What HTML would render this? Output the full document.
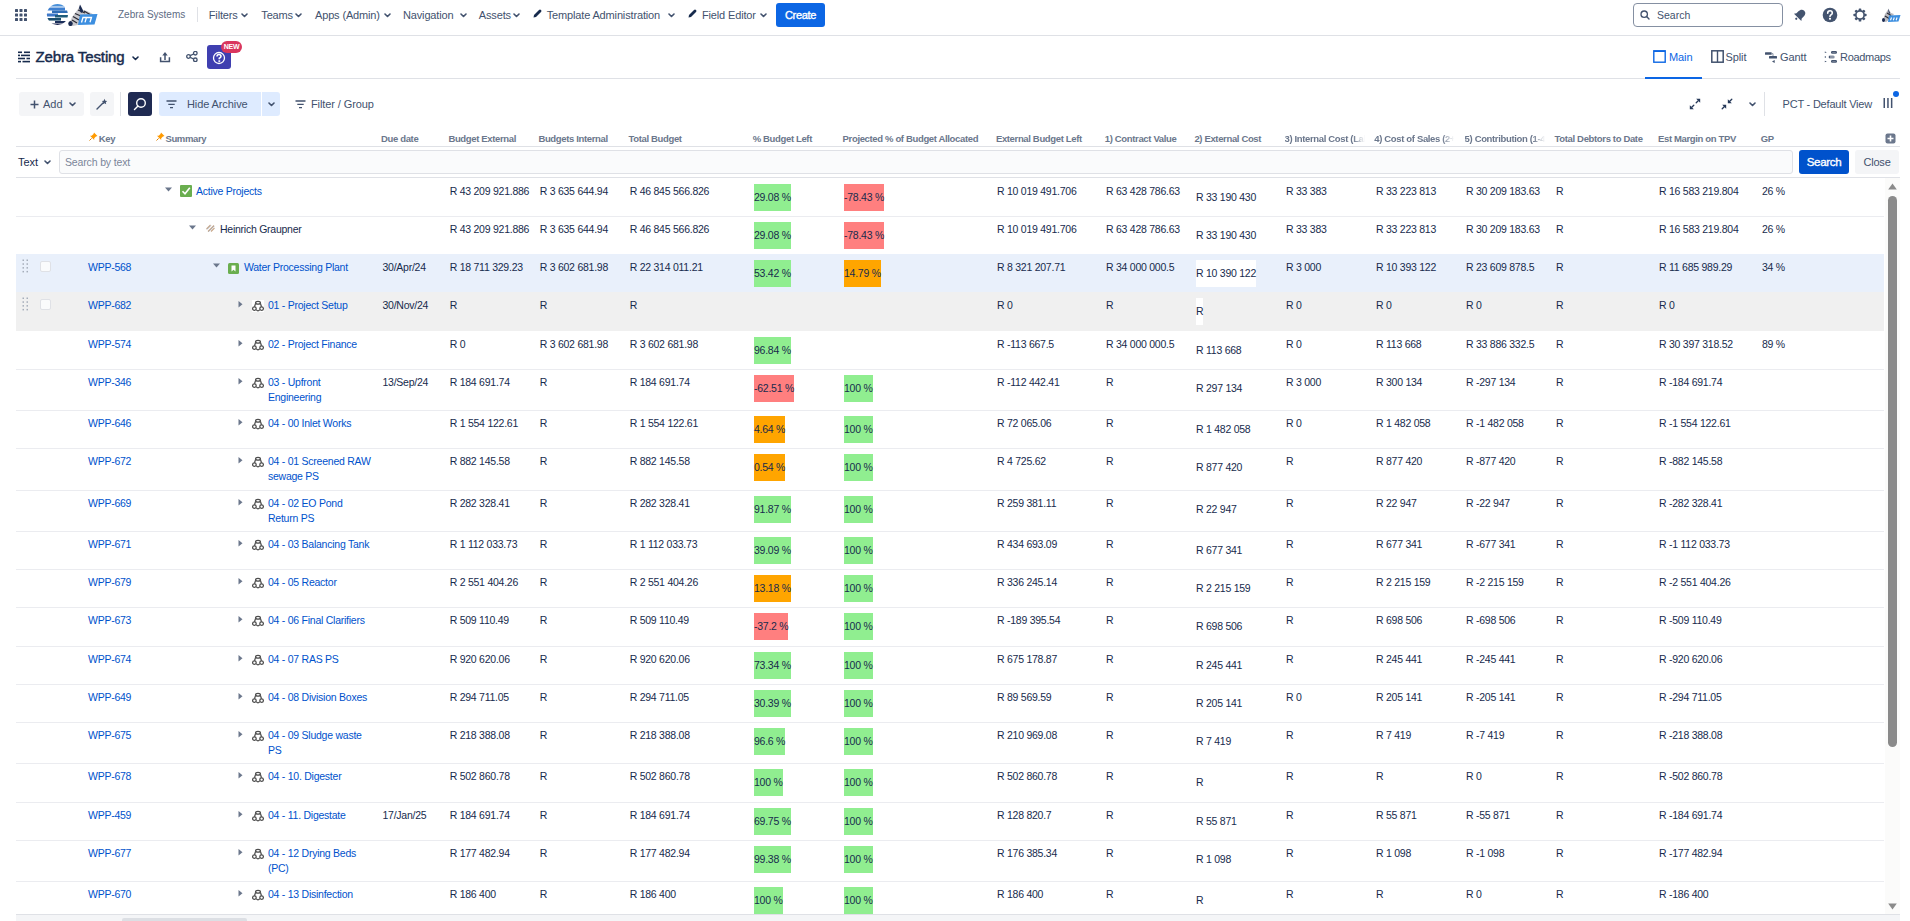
<!DOCTYPE html><html><head><meta charset="utf-8"><style>
*{box-sizing:border-box}
html,body{margin:0;padding:0;width:1910px;height:921px;overflow:hidden;background:#fff;
 font-family:"Liberation Sans",sans-serif;color:#172B4D}
.a{position:absolute;white-space:nowrap}
.nav{font-size:11px;color:#42526E;letter-spacing:-0.15px;top:8px;line-height:14px}
.chev{position:absolute}
.hd{position:absolute;top:133px;font-size:9.5px;font-weight:bold;color:#6B778C;letter-spacing:-0.35px;line-height:12px;white-space:nowrap}
.row{position:absolute;left:16px;width:1868px}
.c{position:absolute;white-space:nowrap;font-size:10.5px;letter-spacing:-0.25px;line-height:15px;color:#172B4D}
.lnk{color:#0052CC}
.bd{position:absolute;height:27px;white-space:nowrap;font-size:10.5px;letter-spacing:-0.25px;line-height:15px;padding-top:6px;color:#172B4D}
.g{background:#90EE90}.r{background:#FF7F7F}.o{background:#FFA500}.w{background:#fff}
</style></head><body>
<div class="a" style="left:0;top:35px;width:1910px;height:1px;background:#DFE1E6"></div>
<svg class="a" style="left:14px;top:8px" width="14" height="14" viewBox="0 0 14 14"><rect x="1.0" y="1.0" width="3" height="3" rx="0.6" fill="#42526E"/><rect x="5.5" y="1.0" width="3" height="3" rx="0.6" fill="#42526E"/><rect x="10.0" y="1.0" width="3" height="3" rx="0.6" fill="#42526E"/><rect x="1.0" y="5.5" width="3" height="3" rx="0.6" fill="#42526E"/><rect x="5.5" y="5.5" width="3" height="3" rx="0.6" fill="#42526E"/><rect x="10.0" y="5.5" width="3" height="3" rx="0.6" fill="#42526E"/><rect x="1.0" y="10.0" width="3" height="3" rx="0.6" fill="#42526E"/><rect x="5.5" y="10.0" width="3" height="3" rx="0.6" fill="#42526E"/><rect x="10.0" y="10.0" width="3" height="3" rx="0.6" fill="#42526E"/></svg>
<svg class="a" style="left:46px;top:3px" width="52" height="23" viewBox="0 0 52 23">
<defs><clipPath id="gc"><circle cx="11.5" cy="11.5" r="10.6"/></clipPath></defs>
<g clip-path="url(#gc)">
<rect x="0" y="0.5" width="23" height="3" fill="#4A90D9"/>
<rect x="0" y="4.5" width="19" height="3" fill="#3D7FD0"/>
<rect x="6" y="7.5" width="17" height="2.5" fill="#2F6DB5"/>
<rect x="0" y="10.5" width="12" height="3" fill="#3E78C8"/>
<rect x="9" y="12" width="14" height="2.5" fill="#1F5C7A"/>
<rect x="0" y="15" width="15" height="2.6" fill="#1B4F6E"/>
<rect x="9" y="18" width="14" height="2" fill="#1A2E5A"/>
<rect x="3" y="20.5" width="16" height="2.5" fill="#141E4A"/>
</g>
<path d="M23 21.5 L26 14 L31 7.5 L34.5 2 L37 7 L41 8 L46 10.5 L48 12.5 L40 15 L34 21.5 L27 23 Z" fill="#C9C9CE"/>
<g stroke="#2A2A34" stroke-width="1.3" fill="none"><path d="M27 13.5 L33 17"/><path d="M29 10.5 L36 13.5"/><path d="M32 7 L39 10"/><path d="M38 8 L44 11.5"/><path d="M26 17 L31 20"/></g>
<path d="M34 1.5 L37.5 8.5 L35 10 L33 5 Z" fill="#1A2A50"/>
<ellipse cx="24.5" cy="20.5" rx="2.2" ry="2.6" fill="#1A2A50"/>
<path d="M34 11.5 L51.5 11 L48.5 21.5 L32 22 Z" fill="#3D8FE0"/>
<path d="M35.5 19.5 L37 14.5 L45.5 14.3 L44 19.3 M40.5 14.4 L39 19.4" fill="none" stroke="#fff" stroke-width="1.3"/>
</svg>
<div class="a" style="left:118px;top:8px;font-size:10px;color:#5E6C84;line-height:14px">Zebra Systems</div>
<div class="a" style="left:197px;top:7px;width:1px;height:15px;background:#DFE1E6"></div>
<div class="a nav" style="left:208.8px">Filters</div>
<svg class="a" style="left:240.5px;top:12.5px" width="7" height="5" viewBox="0 0 7 5"><path d="M1 1 L3.5 3.5 L6 1" fill="none" stroke="#42526E" stroke-width="1.6" stroke-linecap="round" stroke-linejoin="round"/></svg>
<div class="a nav" style="left:261.3px">Teams</div>
<svg class="a" style="left:295px;top:12.5px" width="7" height="5" viewBox="0 0 7 5"><path d="M1 1 L3.5 3.5 L6 1" fill="none" stroke="#42526E" stroke-width="1.6" stroke-linecap="round" stroke-linejoin="round"/></svg>
<div class="a nav" style="left:315px">Apps (Admin)</div>
<svg class="a" style="left:383.5px;top:12.5px" width="7" height="5" viewBox="0 0 7 5"><path d="M1 1 L3.5 3.5 L6 1" fill="none" stroke="#42526E" stroke-width="1.6" stroke-linecap="round" stroke-linejoin="round"/></svg>
<div class="a nav" style="left:403px">Navigation</div>
<svg class="a" style="left:459.5px;top:12.5px" width="7" height="5" viewBox="0 0 7 5"><path d="M1 1 L3.5 3.5 L6 1" fill="none" stroke="#42526E" stroke-width="1.6" stroke-linecap="round" stroke-linejoin="round"/></svg>
<div class="a nav" style="left:478.8px">Assets</div>
<svg class="a" style="left:513px;top:12.5px" width="7" height="5" viewBox="0 0 7 5"><path d="M1 1 L3.5 3.5 L6 1" fill="none" stroke="#42526E" stroke-width="1.6" stroke-linecap="round" stroke-linejoin="round"/></svg>
<svg class="a" style="left:533px;top:9px" width="9" height="9" viewBox="0 0 9 9"><path d="M0.5 8.5 L1 6 L6 1 Q7 0 8 1 Q9 2 8 3 L3 8 Z" fill="#172B4D"/></svg>
<div class="a nav" style="left:546.7px">Template Administration</div>
<svg class="a" style="left:667.5px;top:12.5px" width="7" height="5" viewBox="0 0 7 5"><path d="M1 1 L3.5 3.5 L6 1" fill="none" stroke="#42526E" stroke-width="1.6" stroke-linecap="round" stroke-linejoin="round"/></svg>
<svg class="a" style="left:688px;top:9px" width="9" height="9" viewBox="0 0 9 9"><path d="M0.5 8.5 L1 6 L6 1 Q7 0 8 1 Q9 2 8 3 L3 8 Z" fill="#172B4D"/></svg>
<div class="a nav" style="left:702px">Field Editor</div>
<svg class="a" style="left:759.5px;top:12.5px" width="7" height="5" viewBox="0 0 7 5"><path d="M1 1 L3.5 3.5 L6 1" fill="none" stroke="#42526E" stroke-width="1.6" stroke-linecap="round" stroke-linejoin="round"/></svg>
<div class="a" style="left:776px;top:3px;width:49px;height:24px;background:#0C66E4;border-radius:3px;color:#fff;font-size:11px;line-height:24px;text-align:center;letter-spacing:-0.3px;-webkit-text-stroke:0.35px #fff">Create</div>
<div class="a" style="left:1633px;top:3px;width:150px;height:24px;border:1.2px solid #8590A2;border-radius:4px;background:#fff"></div>
<svg class="a" style="left:1640px;top:10px" width="10" height="10" viewBox="0 0 10 10"><circle cx="4.2" cy="4.2" r="3.2" fill="none" stroke="#42526E" stroke-width="1.3"/><path d="M6.6 6.6 L9 9" stroke="#42526E" stroke-width="1.4" stroke-linecap="round"/></svg>
<div class="a" style="left:1657px;top:7.5px;font-size:10.5px;color:#42526E;line-height:14px">Search</div>
<svg class="a" style="left:1792px;top:7px" width="16" height="16" viewBox="0 0 16 16"><g transform="rotate(45 8 8)" fill="#44546F"><path d="M8 2 C5.3 2 4.3 4.2 4.3 6.5 V9.3 L2.8 11.3 H13.2 L11.7 9.3 V6.5 C11.7 4.2 10.7 2 8 2 Z"/><circle cx="8" cy="13.3" r="1.1"/></g></svg>
<svg class="a" style="left:1822px;top:7px" width="16" height="16" viewBox="0 0 16 16"><circle cx="8" cy="8" r="7.3" fill="#44546F"/><path d="M5.7 6.2 Q5.7 3.8 8 3.8 Q10.3 3.8 10.3 6 Q10.3 7.3 8.8 8 Q8 8.4 8 9.6" fill="none" stroke="#fff" stroke-width="1.6" stroke-linecap="round"/><rect x="7" y="11" width="2" height="1.6" fill="#fff"/></svg>
<svg class="a" style="left:1852.5px;top:7.5px" width="14" height="14" viewBox="0 0 14 14"><g fill="#44546F"><circle cx="7" cy="7" r="5"/><rect x="5.7" y="0.4" width="2.6" height="2.6" rx="0.7" transform="rotate(0 7 7)"/><rect x="5.7" y="0.4" width="2.6" height="2.6" rx="0.7" transform="rotate(45 7 7)"/><rect x="5.7" y="0.4" width="2.6" height="2.6" rx="0.7" transform="rotate(90 7 7)"/><rect x="5.7" y="0.4" width="2.6" height="2.6" rx="0.7" transform="rotate(135 7 7)"/><rect x="5.7" y="0.4" width="2.6" height="2.6" rx="0.7" transform="rotate(180 7 7)"/><rect x="5.7" y="0.4" width="2.6" height="2.6" rx="0.7" transform="rotate(225 7 7)"/><rect x="5.7" y="0.4" width="2.6" height="2.6" rx="0.7" transform="rotate(270 7 7)"/><rect x="5.7" y="0.4" width="2.6" height="2.6" rx="0.7" transform="rotate(315 7 7)"/></g><circle cx="7" cy="7" r="3.3" fill="#fff"/></svg>
<svg class="a" style="left:1881px;top:7px" width="20" height="16" viewBox="0 0 20 16"><path d="M1.5 14 L4 7 L7.5 2 L10 6 L13 7 L9 12 L5 15 Z" fill="#B8B8BE"/><g stroke="#2A2A34" stroke-width="1.1"><path d="M4 9 L8 11.5"/><path d="M6 6 L10 8.5"/></g><path d="M7 1.5 L9 6 L8 7Z" fill="#1A2A50"/><ellipse cx="2.5" cy="13" rx="1.5" ry="2" fill="#1A2A50"/><path d="M8 8.5 L19.5 8 L17.5 14.5 L7 15 Z" fill="#3D8FE0"/><path d="M9.5 13.3 L10.5 10.5 M12.3 13.3 L13.3 10.5 M15.1 13.3 L16.1 10.5" stroke="#fff" stroke-width="1.1"/></svg>
<div class="a" style="left:16px;top:78px;width:1884px;height:1px;background:#DFE1E6"></div>
<svg class="a" style="left:18px;top:51px" width="12" height="12" viewBox="0 0 12 12"><g fill="#172B4D"><rect x="0" y="0.5" width="4" height="1.6"/><rect x="6" y="0.5" width="6" height="1.6"/><rect x="0" y="3.6" width="2" height="1.6"/><rect x="3" y="3.6" width="9" height="1.6"/><rect x="0" y="6.7" width="7" height="1.6"/><rect x="8.5" y="6.7" width="3.5" height="1.6"/><rect x="0" y="9.8" width="3" height="1.6"/><rect x="4.5" y="9.8" width="7.5" height="1.6"/></g></svg>
<div class="a" style="left:35.5px;top:48px;font-size:15px;color:#172B4D;line-height:18px;letter-spacing:-0.12px;-webkit-text-stroke:0.45px #172B4D">Zebra Testing</div>
<svg class="a" style="left:131.5px;top:55.5px" width="7" height="5" viewBox="0 0 7 5"><path d="M1 1 L3.5 3.5 L6 1" fill="none" stroke="#172B4D" stroke-width="1.6" stroke-linecap="round" stroke-linejoin="round"/></svg>
<svg class="a" style="left:159px;top:51px" width="12" height="12" viewBox="0 0 12 12"><path d="M1.6 6.3 V10.6 H10.4 V6.3" fill="none" stroke="#42526E" stroke-width="1.5"/><path d="M6 9 V3.5" stroke="#42526E" stroke-width="1.5"/><path d="M3.3 4.6 L6 1 L8.7 4.6 Z" fill="#42526E"/></svg>
<svg class="a" style="left:186px;top:51px" width="12" height="11" viewBox="0 0 12 11"><g fill="none" stroke="#42526E" stroke-width="1.3"><circle cx="2.5" cy="5.5" r="1.8"/><circle cx="9.3" cy="2.2" r="1.8"/><circle cx="9.3" cy="8.8" r="1.8"/><path d="M4.2 4.6 L7.6 3 M4.2 6.4 L7.6 8"/></g></svg>
<div class="a" style="left:207px;top:45px;width:24px;height:24px;background:#3F3FB0;border-radius:3px"></div>
<svg class="a" style="left:212px;top:50.5px" width="14" height="14" viewBox="0 0 14 14"><circle cx="7" cy="7" r="5.5" fill="none" stroke="#fff" stroke-width="1.3"/><path d="M5 5.6 Q5 3.5 7 3.5 Q9 3.5 9 5.3 Q9 6.5 7.3 7.3 V8.3" fill="none" stroke="#fff" stroke-width="1.6"/><rect x="6.4" y="9.3" width="1.8" height="1.6" fill="#fff"/></svg>
<div class="a" style="left:221px;top:41px;width:21px;height:12px;background:#D9365E;border-radius:6px;color:#fff;font-size:7px;font-weight:bold;line-height:11.5px;text-align:center;letter-spacing:-0.2px">NEW</div>
<svg class="a" style="left:1653px;top:50px" width="13" height="13" viewBox="0 0 13 13"><rect x="0.8" y="0.8" width="11.4" height="11.4" fill="none" stroke="#0C66E4" stroke-width="1.4"/><rect x="0.8" y="0.8" width="11.4" height="1.2" fill="#0C66E4"/></svg>
<div class="a" style="left:1669px;top:50px;font-size:11px;color:#0C66E4;line-height:14px;letter-spacing:-0.1px">Main</div>
<div class="a" style="left:1645px;top:77px;width:57px;height:2px;background:#0C66E4"></div>
<svg class="a" style="left:1710.5px;top:50px" width="13" height="13" viewBox="0 0 13 13"><rect x="0.8" y="0.8" width="11.4" height="11.4" fill="none" stroke="#42526E" stroke-width="1.5"/><rect x="5.8" y="0.8" width="1.4" height="11.4" fill="#42526E"/></svg>
<div class="a" style="left:1725.5px;top:50px;font-size:11px;color:#42526E;line-height:14px;letter-spacing:-0.1px">Split</div>
<svg class="a" style="left:1764px;top:51px" width="14" height="13" viewBox="0 0 14 13"><g fill="#44546F"><rect x="1" y="1.3" width="6.7" height="2.5" rx="0.5"/><rect x="5" y="5" width="8" height="2.4" rx="0.5"/><path d="M8 10.5 L10.7 9.1 V11.9 Z"/></g><path d="M7.5 2.6 H9 V5" fill="none" stroke="#8993A4" stroke-width="1"/></svg>
<div class="a" style="left:1780px;top:50px;font-size:11px;color:#42526E;line-height:14px;letter-spacing:-0.1px">Gantt</div>
<svg class="a" style="left:1824px;top:50px" width="14" height="14" viewBox="0 0 14 14"><g fill="#44546F"><path d="M0.8 1.6 L2.8 2.3 L0.8 3 Z"/><rect x="0.8" y="6.2" width="1" height="1.6"/><path d="M0.8 10.8 L2.8 11.5 L0.8 12.2 Z"/></g><g fill="none" stroke="#44546F" stroke-width="1.3"><rect x="7.6" y="1.6" width="4.8" height="1.6" rx="0.8"/><rect x="7.6" y="10.6" width="4.8" height="1.6" rx="0.8"/></g><rect x="4.7" y="5.4" width="6" height="3.1" rx="1.5" fill="#8993A4"/><rect x="4.9" y="5.8" width="1" height="2.3" fill="#44546F"/></svg>
<div class="a" style="left:1840px;top:50px;font-size:11px;color:#42526E;line-height:14px;letter-spacing:-0.3px">Roadmaps</div>
<div class="a" style="left:19px;top:92px;width:65px;height:24px;background:#F4F5F7;border-radius:3px"></div>
<svg class="a" style="left:29.5px;top:99.5px" width="9" height="9" viewBox="0 0 9 9"><path d="M4.5 0.5 V8.5 M0.5 4.5 H8.5" stroke="#42526E" stroke-width="1.5"/></svg>
<div class="a" style="left:43px;top:97px;font-size:11px;color:#42526E;line-height:14px">Add</div>
<svg class="a" style="left:68.5px;top:102px" width="7" height="5" viewBox="0 0 7 5"><path d="M1 1 L3.5 3.5 L6 1" fill="none" stroke="#42526E" stroke-width="1.6" stroke-linecap="round" stroke-linejoin="round"/></svg>
<div class="a" style="left:90px;top:92px;width:24px;height:24px;background:#F4F5F7;border-radius:3px"></div>
<svg class="a" style="left:96px;top:98px" width="12" height="12" viewBox="0 0 12 12"><path d="M1 11 L7 5" stroke="#42526E" stroke-width="1.4" stroke-linecap="round"/><path d="M8.5 0.8 L9.3 2.7 L11.2 3 L9.8 4.3 L10.2 6.2 L8.5 5.2 L6.8 6.2 L7.2 4.3 L5.8 3 L7.7 2.7 Z" fill="#42526E"/></svg>
<div class="a" style="left:120px;top:92px;width:1px;height:24px;background:#DFE1E6"></div>
<div class="a" style="left:128px;top:92px;width:24px;height:24px;background:#1F2A52;border-radius:3px"></div>
<svg class="a" style="left:133px;top:97px" width="14" height="14" viewBox="0 0 14 14"><circle cx="8" cy="6" r="4.3" fill="none" stroke="#fff" stroke-width="1.4"/><path d="M5 9 L1.5 12.5" stroke="#fff" stroke-width="1.5" stroke-linecap="round"/></svg>
<div class="a" style="left:159px;top:92px;width:121px;height:24px;background:#DEEBFF;border-radius:3px"></div>
<div class="a" style="left:261px;top:92px;width:1px;height:24px;background:#fff"></div>
<svg class="a" style="left:166px;top:99.5px" width="11" height="9" viewBox="0 0 11 9"><path d="M0.5 1 H10.5 M2.3 4.3 H8.7 M4 7.6 H7" stroke="#42526E" stroke-width="1.3"/></svg>
<div class="a" style="left:187px;top:97px;font-size:11px;color:#42526E;line-height:14px;letter-spacing:-0.1px">Hide Archive</div>
<svg class="a" style="left:267.5px;top:102px" width="7" height="5" viewBox="0 0 7 5"><path d="M1 1 L3.5 3.5 L6 1" fill="none" stroke="#42526E" stroke-width="1.6" stroke-linecap="round" stroke-linejoin="round"/></svg>
<svg class="a" style="left:295px;top:99.5px" width="11" height="9" viewBox="0 0 11 9"><path d="M0.5 1 H10.5 M2.3 4.3 H8.7 M4 7.6 H7" stroke="#42526E" stroke-width="1.3"/></svg>
<div class="a" style="left:311px;top:97px;font-size:11px;color:#42526E;line-height:14px;letter-spacing:-0.1px">Filter / Group</div>
<svg class="a" style="left:1689px;top:98px" width="12" height="12" viewBox="0 0 12 12"><g fill="#253858"><path d="M11.2 0.8 V4.8 L7.2 0.8 Z"/><path d="M0.8 11.2 V7.2 L4.8 11.2 Z"/></g><g stroke="#253858" stroke-width="1.3" stroke-linecap="round"><path d="M9 3 L7.2 4.8"/><path d="M3 9 L4.8 7.2"/></g></svg>
<svg class="a" style="left:1721px;top:98px" width="12" height="12" viewBox="0 0 12 12"><g fill="#253858"><path d="M6.8 5.2 V1.2 L10.8 5.2 Z"/><path d="M5.2 6.8 H1.2 L5.2 10.8 Z"/></g><g stroke="#253858" stroke-width="1.3" stroke-linecap="round"><path d="M8.5 3.5 L10.8 1.2"/><path d="M3.5 8.5 L1.2 10.8"/></g></svg>
<svg class="a" style="left:1748.5px;top:102px" width="7" height="5" viewBox="0 0 7 5"><path d="M1 1 L3.5 3.5 L6 1" fill="none" stroke="#42526E" stroke-width="1.6" stroke-linecap="round" stroke-linejoin="round"/></svg>
<div class="a" style="left:1764px;top:92px;width:1px;height:24px;background:#DFE1E6"></div>
<div class="a" style="left:1782.5px;top:97px;font-size:11px;color:#42526E;line-height:14px;letter-spacing:-0.2px">PCT - Default View</div>
<svg class="a" style="left:1883px;top:97px" width="10" height="12" viewBox="0 0 10 12"><g fill="#42526E"><rect x="0.5" y="1" width="1.5" height="10"/><rect x="4.2" y="1" width="1.5" height="10"/><rect x="7.9" y="1" width="1.5" height="10"/></g></svg>
<div class="a" style="left:1893px;top:91px;width:6px;height:6px;border-radius:50%;background:#0C66E4"></div>
<svg class="a" style="left:88.5px;top:132px" width="9" height="9" viewBox="0 0 9 9"><path d="M5 0.5 L8.5 4 L7 4.5 L5.2 6.3 L5.2 8 L1 3.8 L2.7 3.8 L4.5 2 Z" fill="#FF9A00"/><path d="M2.6 6.4 L0.5 8.5" stroke="#E08000" stroke-width="1"/></svg>
<svg class="a" style="left:155.5px;top:132px" width="9" height="9" viewBox="0 0 9 9"><path d="M5 0.5 L8.5 4 L7 4.5 L5.2 6.3 L5.2 8 L1 3.8 L2.7 3.8 L4.5 2 Z" fill="#FF9A00"/><path d="M2.6 6.4 L0.5 8.5" stroke="#E08000" stroke-width="1"/></svg>
<div class="hd" style="left:98.8px">Key</div>
<div class="hd" style="left:165.4px">Summary</div>
<div class="hd" style="left:381px">Due date</div>
<div class="hd" style="left:448.4px">Budget External</div>
<div class="hd" style="left:538.4px">Budgets Internal</div>
<div class="hd" style="left:628.5px">Total Budget</div>
<div class="hd" style="left:752.7px">% Budget Left</div>
<div class="hd" style="left:842.6px">Projected % of Budget Allocated</div>
<div class="hd" style="left:995.9px">External Budget Left</div>
<div class="hd" style="left:1104.8px">1) Contract Value</div>
<div class="hd" style="left:1194.4px">2) External Cost</div>
<div class="hd" style="left:1284.5px;width:80px;overflow:hidden;-webkit-mask-image:linear-gradient(90deg,#000 85%,transparent)">3) Internal Cost (Labour)</div>
<div class="hd" style="left:1374.3px;width:80px;overflow:hidden;-webkit-mask-image:linear-gradient(90deg,#000 85%,transparent)">4) Cost of Sales (2+3)</div>
<div class="hd" style="left:1464.6px;width:80px;overflow:hidden;-webkit-mask-image:linear-gradient(90deg,#000 85%,transparent)">5) Contribution (1-4)</div>
<div class="hd" style="left:1554.6px">Total Debtors to Date</div>
<div class="hd" style="left:1658px">Est Margin on TPV</div>
<div class="hd" style="left:1760.7px">GP</div>
<svg class="a" style="left:1885px;top:133px" width="11" height="11" viewBox="0 0 11 11"><rect x="0.5" y="0.5" width="10" height="10" rx="2" fill="#6B778C"/><path d="M5.5 2.5 V8.5 M2.5 5.5 H8.5" stroke="#fff" stroke-width="1.6"/></svg>
<div class="a" style="left:16px;top:146px;width:1884px;height:1px;background:#DFE1E6"></div>
<div class="a" style="left:18px;top:155px;font-size:11px;color:#172B4D;line-height:14px">Text</div>
<svg class="a" style="left:43.5px;top:160px" width="7" height="5" viewBox="0 0 7 5"><path d="M1 1 L3.5 3.5 L6 1" fill="none" stroke="#42526E" stroke-width="1.6" stroke-linecap="round" stroke-linejoin="round"/></svg>
<div class="a" style="left:59px;top:150px;width:1734px;height:24px;background:#FAFBFC;border:1px solid #DFE1E6;border-radius:3px"></div>
<div class="a" style="left:65px;top:155px;font-size:10.5px;color:#7A869A;line-height:14px;letter-spacing:-0.15px">Search by text</div>
<div class="a" style="left:1799px;top:150px;width:50px;height:24px;background:#0052CC;border-radius:3px;color:#fff;font-size:11.5px;line-height:24px;text-align:center;letter-spacing:-0.3px;-webkit-text-stroke:0.35px #fff">Search</div>
<div class="a" style="left:1855px;top:150px;width:44px;height:24px;background:#F4F5F7;border-radius:3px;color:#42526E;font-size:11px;line-height:24px;text-align:center;letter-spacing:-0.2px">Close</div>
<div class="a" style="left:16px;top:177px;width:1884px;height:1px;background:#DFE1E6"></div>
<div class="a" style="left:16px;top:216px;width:1868px;height:1px;background:#EBECF0"></div>
<svg class="a" style="left:165px;top:187px" width="7" height="5" viewBox="0 0 7 5"><path d="M0 0.5 H7 L3.5 4.5 Z" fill="#6B778C"/></svg>
<div class="a" style="left:180px;top:185px;line-height:0"><svg width="12" height="12" viewBox="0 0 12 12"><rect x="0" y="0" width="12" height="12" rx="1" fill="#6AAE4F"/><path d="M2.5 6.2 L5 8.8 L9.8 2.8" fill="none" stroke="#fff" stroke-width="1.6"/></svg></div>
<div class="c lnk" style="left:196px;top:184px">Active Projects</div>
<div class="c" style="left:449.7px;top:184px">R 43 209 921.886</div>
<div class="c" style="left:539.7px;top:184px">R 3 635 644.94</div>
<div class="c" style="left:629.7px;top:184px">R 46 845 566.826</div>
<div class="bd g" style="left:754px;top:184px">29.08 %</div>
<div class="bd r" style="left:844px;top:184px">-78.43 %</div>
<div class="c" style="left:997px;top:184px">R 10 019 491.706</div>
<div class="c" style="left:1106px;top:184px">R 63 428 786.63</div>
<div class="bd w" style="left:1196px;top:184px">R 33 190 430</div>
<div class="c" style="left:1286px;top:184px">R 33 383</div>
<div class="c" style="left:1376px;top:184px">R 33 223 813</div>
<div class="c" style="left:1466px;top:184px">R 30 209 183.63</div>
<div class="c" style="left:1556px;top:184px">R</div>
<div class="c" style="left:1659px;top:184px">R 16 583 219.804</div>
<div class="c" style="left:1762px;top:184px">26 %</div>
<div class="a" style="left:16px;top:254px;width:1868px;height:1px;background:#EBECF0"></div>
<svg class="a" style="left:189px;top:225px" width="7" height="5" viewBox="0 0 7 5"><path d="M0 0.5 H7 L3.5 4.5 Z" fill="#6B778C"/></svg>
<div class="a" style="left:206px;top:224px;line-height:0"><svg width="9" height="8" viewBox="0 0 9 8"><path d="M0.5 5 L4.5 1 M2 7.5 L8 1.5 M5 7.5 L8.5 4" stroke="#C8A88A" stroke-width="1.1"/><path d="M1 5.5 L5 1.5 M2.5 7.8 L8.3 2" stroke="#8090A8" stroke-width="0.5"/></svg></div>
<div class="c" style="left:220px;top:222px">Heinrich Graupner</div>
<div class="c" style="left:449.7px;top:222px">R 43 209 921.886</div>
<div class="c" style="left:539.7px;top:222px">R 3 635 644.94</div>
<div class="c" style="left:629.7px;top:222px">R 46 845 566.826</div>
<div class="bd g" style="left:754px;top:222px">29.08 %</div>
<div class="bd r" style="left:844px;top:222px">-78.43 %</div>
<div class="c" style="left:997px;top:222px">R 10 019 491.706</div>
<div class="c" style="left:1106px;top:222px">R 63 428 786.63</div>
<div class="bd w" style="left:1196px;top:222px">R 33 190 430</div>
<div class="c" style="left:1286px;top:222px">R 33 383</div>
<div class="c" style="left:1376px;top:222px">R 33 223 813</div>
<div class="c" style="left:1466px;top:222px">R 30 209 183.63</div>
<div class="c" style="left:1556px;top:222px">R</div>
<div class="c" style="left:1659px;top:222px">R 16 583 219.804</div>
<div class="c" style="left:1762px;top:222px">26 %</div>
<div class="a" style="left:16px;top:254px;width:1868px;height:38px;background:#E9F0FB"></div>
<svg class="a" style="left:22px;top:259px" width="7" height="14" viewBox="0 0 7 14"><rect x="0.5" y="0.5" width="1.5" height="1.5" fill="#A5ADBA"/><rect x="0.5" y="4.3" width="1.5" height="1.5" fill="#A5ADBA"/><rect x="0.5" y="8.1" width="1.5" height="1.5" fill="#A5ADBA"/><rect x="0.5" y="11.9" width="1.5" height="1.5" fill="#A5ADBA"/><rect x="4.5" y="0.5" width="1.5" height="1.5" fill="#A5ADBA"/><rect x="4.5" y="4.3" width="1.5" height="1.5" fill="#A5ADBA"/><rect x="4.5" y="8.1" width="1.5" height="1.5" fill="#A5ADBA"/><rect x="4.5" y="11.9" width="1.5" height="1.5" fill="#A5ADBA"/></svg>
<div class="a" style="left:39.5px;top:261px;width:11px;height:11px;border:1px solid #DFE1E6;border-radius:2px;background:#FAFBFC"></div>
<div class="c lnk" style="left:88px;top:260px">WPP-568</div>
<svg class="a" style="left:213px;top:263px" width="7" height="5" viewBox="0 0 7 5"><path d="M0 0.5 H7 L3.5 4.5 Z" fill="#6B778C"/></svg>
<div class="a" style="left:228px;top:263px;line-height:0"><svg width="11" height="11" viewBox="0 0 11 11"><rect x="0" y="0" width="11" height="11" rx="1.5" fill="#6AAE4F"/><path d="M3.5 2.5 H7.5 V8.5 L5.5 6.8 L3.5 8.5 Z" fill="#fff"/></svg></div>
<div class="c lnk" style="left:244px;top:260px">Water Processing Plant</div>
<div class="c" style="left:382.5px;top:260px">30/Apr/24</div>
<div class="c" style="left:449.7px;top:260px">R 18 711 329.23</div>
<div class="c" style="left:539.7px;top:260px">R 3 602 681.98</div>
<div class="c" style="left:629.7px;top:260px">R 22 314 011.21</div>
<div class="bd g" style="left:754px;top:260px">53.42 %</div>
<div class="bd o" style="left:844px;top:260px">14.79 %</div>
<div class="c" style="left:997px;top:260px">R 8 321 207.71</div>
<div class="c" style="left:1106px;top:260px">R 34 000 000.5</div>
<div class="bd w" style="left:1196px;top:260px">R 10 390 122</div>
<div class="c" style="left:1286px;top:260px">R 3 000</div>
<div class="c" style="left:1376px;top:260px">R 10 393 122</div>
<div class="c" style="left:1466px;top:260px">R 23 609 878.5</div>
<div class="c" style="left:1556px;top:260px">R</div>
<div class="c" style="left:1659px;top:260px">R 11 685 989.29</div>
<div class="c" style="left:1762px;top:260px">34 %</div>
<div class="a" style="left:16px;top:292px;width:1868px;height:39px;background:#F0F0F0"></div>
<svg class="a" style="left:22px;top:297px" width="7" height="14" viewBox="0 0 7 14"><rect x="0.5" y="0.5" width="1.5" height="1.5" fill="#A5ADBA"/><rect x="0.5" y="4.3" width="1.5" height="1.5" fill="#A5ADBA"/><rect x="0.5" y="8.1" width="1.5" height="1.5" fill="#A5ADBA"/><rect x="0.5" y="11.9" width="1.5" height="1.5" fill="#A5ADBA"/><rect x="4.5" y="0.5" width="1.5" height="1.5" fill="#A5ADBA"/><rect x="4.5" y="4.3" width="1.5" height="1.5" fill="#A5ADBA"/><rect x="4.5" y="8.1" width="1.5" height="1.5" fill="#A5ADBA"/><rect x="4.5" y="11.9" width="1.5" height="1.5" fill="#A5ADBA"/></svg>
<div class="a" style="left:39.5px;top:299px;width:11px;height:11px;border:1px solid #DFE1E6;border-radius:2px;background:#FAFBFC"></div>
<div class="c lnk" style="left:88px;top:298px">WPP-682</div>
<svg class="a" style="left:238px;top:301px" width="5" height="7" viewBox="0 0 5 7"><path d="M0.5 0 V6.5 L4.5 3.25 Z" fill="#6B778C"/></svg>
<div class="a" style="left:252px;top:300px;line-height:0"><svg width="12" height="12" viewBox="0 0 12 12"><rect x="0" y="0" width="12" height="12" fill="#fff"/><g fill="none" stroke="#4D4D4D" stroke-width="1.25"><ellipse cx="6" cy="2.8" rx="2.4" ry="1.4"/><circle cx="2.4" cy="8.6" r="1.8"/><circle cx="9.6" cy="8.6" r="1.8"/><path d="M3.6 3.4 L2.5 6.7 M8.4 3.4 L9.5 6.7 M4.2 9.6 Q6 11.9 7.8 9.6"/></g></svg></div>
<div class="c lnk" style="left:268px;top:298px">01 - Project Setup</div>
<div class="c" style="left:382.5px;top:298px">30/Nov/24</div>
<div class="c" style="left:449.7px;top:298px">R</div>
<div class="c" style="left:539.7px;top:298px">R</div>
<div class="c" style="left:629.7px;top:298px">R</div>
<div class="c" style="left:997px;top:298px">R 0</div>
<div class="c" style="left:1106px;top:298px">R</div>
<div class="bd w" style="left:1196px;top:298px">R</div>
<div class="c" style="left:1286px;top:298px">R 0</div>
<div class="c" style="left:1376px;top:298px">R 0</div>
<div class="c" style="left:1466px;top:298px">R 0</div>
<div class="c" style="left:1556px;top:298px">R</div>
<div class="c" style="left:1659px;top:298px">R 0</div>
<div class="a" style="left:16px;top:369px;width:1868px;height:1px;background:#EBECF0"></div>
<div class="c lnk" style="left:88px;top:337px">WPP-574</div>
<svg class="a" style="left:238px;top:340px" width="5" height="7" viewBox="0 0 5 7"><path d="M0.5 0 V6.5 L4.5 3.25 Z" fill="#6B778C"/></svg>
<div class="a" style="left:252px;top:339px;line-height:0"><svg width="12" height="12" viewBox="0 0 12 12"><rect x="0" y="0" width="12" height="12" fill="#fff"/><g fill="none" stroke="#4D4D4D" stroke-width="1.25"><ellipse cx="6" cy="2.8" rx="2.4" ry="1.4"/><circle cx="2.4" cy="8.6" r="1.8"/><circle cx="9.6" cy="8.6" r="1.8"/><path d="M3.6 3.4 L2.5 6.7 M8.4 3.4 L9.5 6.7 M4.2 9.6 Q6 11.9 7.8 9.6"/></g></svg></div>
<div class="c lnk" style="left:268px;top:337px">02 - Project Finance</div>
<div class="c" style="left:449.7px;top:337px">R 0</div>
<div class="c" style="left:539.7px;top:337px">R 3 602 681.98</div>
<div class="c" style="left:629.7px;top:337px">R 3 602 681.98</div>
<div class="bd g" style="left:754px;top:337px">96.84 %</div>
<div class="c" style="left:997px;top:337px">R -113 667.5</div>
<div class="c" style="left:1106px;top:337px">R 34 000 000.5</div>
<div class="bd w" style="left:1196px;top:337px">R 113 668</div>
<div class="c" style="left:1286px;top:337px">R 0</div>
<div class="c" style="left:1376px;top:337px">R 113 668</div>
<div class="c" style="left:1466px;top:337px">R 33 886 332.5</div>
<div class="c" style="left:1556px;top:337px">R</div>
<div class="c" style="left:1659px;top:337px">R 30 397 318.52</div>
<div class="c" style="left:1762px;top:337px">89 %</div>
<div class="a" style="left:16px;top:410px;width:1868px;height:1px;background:#EBECF0"></div>
<div class="c lnk" style="left:88px;top:375px">WPP-346</div>
<svg class="a" style="left:238px;top:378px" width="5" height="7" viewBox="0 0 5 7"><path d="M0.5 0 V6.5 L4.5 3.25 Z" fill="#6B778C"/></svg>
<div class="a" style="left:252px;top:377px;line-height:0"><svg width="12" height="12" viewBox="0 0 12 12"><rect x="0" y="0" width="12" height="12" fill="#fff"/><g fill="none" stroke="#4D4D4D" stroke-width="1.25"><ellipse cx="6" cy="2.8" rx="2.4" ry="1.4"/><circle cx="2.4" cy="8.6" r="1.8"/><circle cx="9.6" cy="8.6" r="1.8"/><path d="M3.6 3.4 L2.5 6.7 M8.4 3.4 L9.5 6.7 M4.2 9.6 Q6 11.9 7.8 9.6"/></g></svg></div>
<div class="c lnk" style="left:268px;top:375px">03 - Upfront</div>
<div class="c lnk" style="left:268px;top:390px">Engineering</div>
<div class="c" style="left:382.5px;top:375px">13/Sep/24</div>
<div class="c" style="left:449.7px;top:375px">R 184 691.74</div>
<div class="c" style="left:539.7px;top:375px">R</div>
<div class="c" style="left:629.7px;top:375px">R 184 691.74</div>
<div class="bd r" style="left:754px;top:375px">-62.51 %</div>
<div class="bd g" style="left:844px;top:375px">100 %</div>
<div class="c" style="left:997px;top:375px">R -112 442.41</div>
<div class="c" style="left:1106px;top:375px">R</div>
<div class="bd w" style="left:1196px;top:375px">R 297 134</div>
<div class="c" style="left:1286px;top:375px">R 3 000</div>
<div class="c" style="left:1376px;top:375px">R 300 134</div>
<div class="c" style="left:1466px;top:375px">R -297 134</div>
<div class="c" style="left:1556px;top:375px">R</div>
<div class="c" style="left:1659px;top:375px">R -184 691.74</div>
<div class="a" style="left:16px;top:448px;width:1868px;height:1px;background:#EBECF0"></div>
<div class="c lnk" style="left:88px;top:416px">WPP-646</div>
<svg class="a" style="left:238px;top:419px" width="5" height="7" viewBox="0 0 5 7"><path d="M0.5 0 V6.5 L4.5 3.25 Z" fill="#6B778C"/></svg>
<div class="a" style="left:252px;top:418px;line-height:0"><svg width="12" height="12" viewBox="0 0 12 12"><rect x="0" y="0" width="12" height="12" fill="#fff"/><g fill="none" stroke="#4D4D4D" stroke-width="1.25"><ellipse cx="6" cy="2.8" rx="2.4" ry="1.4"/><circle cx="2.4" cy="8.6" r="1.8"/><circle cx="9.6" cy="8.6" r="1.8"/><path d="M3.6 3.4 L2.5 6.7 M8.4 3.4 L9.5 6.7 M4.2 9.6 Q6 11.9 7.8 9.6"/></g></svg></div>
<div class="c lnk" style="left:268px;top:416px">04 - 00 Inlet Works</div>
<div class="c" style="left:449.7px;top:416px">R 1 554 122.61</div>
<div class="c" style="left:539.7px;top:416px">R</div>
<div class="c" style="left:629.7px;top:416px">R 1 554 122.61</div>
<div class="bd o" style="left:754px;top:416px">4.64 %</div>
<div class="bd g" style="left:844px;top:416px">100 %</div>
<div class="c" style="left:997px;top:416px">R 72 065.06</div>
<div class="c" style="left:1106px;top:416px">R</div>
<div class="bd w" style="left:1196px;top:416px">R 1 482 058</div>
<div class="c" style="left:1286px;top:416px">R 0</div>
<div class="c" style="left:1376px;top:416px">R 1 482 058</div>
<div class="c" style="left:1466px;top:416px">R -1 482 058</div>
<div class="c" style="left:1556px;top:416px">R</div>
<div class="c" style="left:1659px;top:416px">R -1 554 122.61</div>
<div class="a" style="left:16px;top:490px;width:1868px;height:1px;background:#EBECF0"></div>
<div class="c lnk" style="left:88px;top:454px">WPP-672</div>
<svg class="a" style="left:238px;top:457px" width="5" height="7" viewBox="0 0 5 7"><path d="M0.5 0 V6.5 L4.5 3.25 Z" fill="#6B778C"/></svg>
<div class="a" style="left:252px;top:456px;line-height:0"><svg width="12" height="12" viewBox="0 0 12 12"><rect x="0" y="0" width="12" height="12" fill="#fff"/><g fill="none" stroke="#4D4D4D" stroke-width="1.25"><ellipse cx="6" cy="2.8" rx="2.4" ry="1.4"/><circle cx="2.4" cy="8.6" r="1.8"/><circle cx="9.6" cy="8.6" r="1.8"/><path d="M3.6 3.4 L2.5 6.7 M8.4 3.4 L9.5 6.7 M4.2 9.6 Q6 11.9 7.8 9.6"/></g></svg></div>
<div class="c lnk" style="left:268px;top:454px">04 - 01 Screened RAW</div>
<div class="c lnk" style="left:268px;top:469px">sewage PS</div>
<div class="c" style="left:449.7px;top:454px">R 882 145.58</div>
<div class="c" style="left:539.7px;top:454px">R</div>
<div class="c" style="left:629.7px;top:454px">R 882 145.58</div>
<div class="bd o" style="left:754px;top:454px">0.54 %</div>
<div class="bd g" style="left:844px;top:454px">100 %</div>
<div class="c" style="left:997px;top:454px">R 4 725.62</div>
<div class="c" style="left:1106px;top:454px">R</div>
<div class="bd w" style="left:1196px;top:454px">R 877 420</div>
<div class="c" style="left:1286px;top:454px">R</div>
<div class="c" style="left:1376px;top:454px">R 877 420</div>
<div class="c" style="left:1466px;top:454px">R -877 420</div>
<div class="c" style="left:1556px;top:454px">R</div>
<div class="c" style="left:1659px;top:454px">R -882 145.58</div>
<div class="a" style="left:16px;top:531px;width:1868px;height:1px;background:#EBECF0"></div>
<div class="c lnk" style="left:88px;top:496px">WPP-669</div>
<svg class="a" style="left:238px;top:499px" width="5" height="7" viewBox="0 0 5 7"><path d="M0.5 0 V6.5 L4.5 3.25 Z" fill="#6B778C"/></svg>
<div class="a" style="left:252px;top:498px;line-height:0"><svg width="12" height="12" viewBox="0 0 12 12"><rect x="0" y="0" width="12" height="12" fill="#fff"/><g fill="none" stroke="#4D4D4D" stroke-width="1.25"><ellipse cx="6" cy="2.8" rx="2.4" ry="1.4"/><circle cx="2.4" cy="8.6" r="1.8"/><circle cx="9.6" cy="8.6" r="1.8"/><path d="M3.6 3.4 L2.5 6.7 M8.4 3.4 L9.5 6.7 M4.2 9.6 Q6 11.9 7.8 9.6"/></g></svg></div>
<div class="c lnk" style="left:268px;top:496px">04 - 02 EO Pond</div>
<div class="c lnk" style="left:268px;top:511px">Return PS</div>
<div class="c" style="left:449.7px;top:496px">R 282 328.41</div>
<div class="c" style="left:539.7px;top:496px">R</div>
<div class="c" style="left:629.7px;top:496px">R 282 328.41</div>
<div class="bd g" style="left:754px;top:496px">91.87 %</div>
<div class="bd g" style="left:844px;top:496px">100 %</div>
<div class="c" style="left:997px;top:496px">R 259 381.11</div>
<div class="c" style="left:1106px;top:496px">R</div>
<div class="bd w" style="left:1196px;top:496px">R 22 947</div>
<div class="c" style="left:1286px;top:496px">R</div>
<div class="c" style="left:1376px;top:496px">R 22 947</div>
<div class="c" style="left:1466px;top:496px">R -22 947</div>
<div class="c" style="left:1556px;top:496px">R</div>
<div class="c" style="left:1659px;top:496px">R -282 328.41</div>
<div class="a" style="left:16px;top:569px;width:1868px;height:1px;background:#EBECF0"></div>
<div class="c lnk" style="left:88px;top:537px">WPP-671</div>
<svg class="a" style="left:238px;top:540px" width="5" height="7" viewBox="0 0 5 7"><path d="M0.5 0 V6.5 L4.5 3.25 Z" fill="#6B778C"/></svg>
<div class="a" style="left:252px;top:539px;line-height:0"><svg width="12" height="12" viewBox="0 0 12 12"><rect x="0" y="0" width="12" height="12" fill="#fff"/><g fill="none" stroke="#4D4D4D" stroke-width="1.25"><ellipse cx="6" cy="2.8" rx="2.4" ry="1.4"/><circle cx="2.4" cy="8.6" r="1.8"/><circle cx="9.6" cy="8.6" r="1.8"/><path d="M3.6 3.4 L2.5 6.7 M8.4 3.4 L9.5 6.7 M4.2 9.6 Q6 11.9 7.8 9.6"/></g></svg></div>
<div class="c lnk" style="left:268px;top:537px">04 - 03 Balancing Tank</div>
<div class="c" style="left:449.7px;top:537px">R 1 112 033.73</div>
<div class="c" style="left:539.7px;top:537px">R</div>
<div class="c" style="left:629.7px;top:537px">R 1 112 033.73</div>
<div class="bd g" style="left:754px;top:537px">39.09 %</div>
<div class="bd g" style="left:844px;top:537px">100 %</div>
<div class="c" style="left:997px;top:537px">R 434 693.09</div>
<div class="c" style="left:1106px;top:537px">R</div>
<div class="bd w" style="left:1196px;top:537px">R 677 341</div>
<div class="c" style="left:1286px;top:537px">R</div>
<div class="c" style="left:1376px;top:537px">R 677 341</div>
<div class="c" style="left:1466px;top:537px">R -677 341</div>
<div class="c" style="left:1556px;top:537px">R</div>
<div class="c" style="left:1659px;top:537px">R -1 112 033.73</div>
<div class="a" style="left:16px;top:607px;width:1868px;height:1px;background:#EBECF0"></div>
<div class="c lnk" style="left:88px;top:575px">WPP-679</div>
<svg class="a" style="left:238px;top:578px" width="5" height="7" viewBox="0 0 5 7"><path d="M0.5 0 V6.5 L4.5 3.25 Z" fill="#6B778C"/></svg>
<div class="a" style="left:252px;top:577px;line-height:0"><svg width="12" height="12" viewBox="0 0 12 12"><rect x="0" y="0" width="12" height="12" fill="#fff"/><g fill="none" stroke="#4D4D4D" stroke-width="1.25"><ellipse cx="6" cy="2.8" rx="2.4" ry="1.4"/><circle cx="2.4" cy="8.6" r="1.8"/><circle cx="9.6" cy="8.6" r="1.8"/><path d="M3.6 3.4 L2.5 6.7 M8.4 3.4 L9.5 6.7 M4.2 9.6 Q6 11.9 7.8 9.6"/></g></svg></div>
<div class="c lnk" style="left:268px;top:575px">04 - 05 Reactor</div>
<div class="c" style="left:449.7px;top:575px">R 2 551 404.26</div>
<div class="c" style="left:539.7px;top:575px">R</div>
<div class="c" style="left:629.7px;top:575px">R 2 551 404.26</div>
<div class="bd o" style="left:754px;top:575px">13.18 %</div>
<div class="bd g" style="left:844px;top:575px">100 %</div>
<div class="c" style="left:997px;top:575px">R 336 245.14</div>
<div class="c" style="left:1106px;top:575px">R</div>
<div class="bd w" style="left:1196px;top:575px">R 2 215 159</div>
<div class="c" style="left:1286px;top:575px">R</div>
<div class="c" style="left:1376px;top:575px">R 2 215 159</div>
<div class="c" style="left:1466px;top:575px">R -2 215 159</div>
<div class="c" style="left:1556px;top:575px">R</div>
<div class="c" style="left:1659px;top:575px">R -2 551 404.26</div>
<div class="a" style="left:16px;top:646px;width:1868px;height:1px;background:#EBECF0"></div>
<div class="c lnk" style="left:88px;top:613px">WPP-673</div>
<svg class="a" style="left:238px;top:616px" width="5" height="7" viewBox="0 0 5 7"><path d="M0.5 0 V6.5 L4.5 3.25 Z" fill="#6B778C"/></svg>
<div class="a" style="left:252px;top:615px;line-height:0"><svg width="12" height="12" viewBox="0 0 12 12"><rect x="0" y="0" width="12" height="12" fill="#fff"/><g fill="none" stroke="#4D4D4D" stroke-width="1.25"><ellipse cx="6" cy="2.8" rx="2.4" ry="1.4"/><circle cx="2.4" cy="8.6" r="1.8"/><circle cx="9.6" cy="8.6" r="1.8"/><path d="M3.6 3.4 L2.5 6.7 M8.4 3.4 L9.5 6.7 M4.2 9.6 Q6 11.9 7.8 9.6"/></g></svg></div>
<div class="c lnk" style="left:268px;top:613px">04 - 06 Final Clarifiers</div>
<div class="c" style="left:449.7px;top:613px">R 509 110.49</div>
<div class="c" style="left:539.7px;top:613px">R</div>
<div class="c" style="left:629.7px;top:613px">R 509 110.49</div>
<div class="bd r" style="left:754px;top:613px">-37.2 %</div>
<div class="bd g" style="left:844px;top:613px">100 %</div>
<div class="c" style="left:997px;top:613px">R -189 395.54</div>
<div class="c" style="left:1106px;top:613px">R</div>
<div class="bd w" style="left:1196px;top:613px">R 698 506</div>
<div class="c" style="left:1286px;top:613px">R</div>
<div class="c" style="left:1376px;top:613px">R 698 506</div>
<div class="c" style="left:1466px;top:613px">R -698 506</div>
<div class="c" style="left:1556px;top:613px">R</div>
<div class="c" style="left:1659px;top:613px">R -509 110.49</div>
<div class="a" style="left:16px;top:684px;width:1868px;height:1px;background:#EBECF0"></div>
<div class="c lnk" style="left:88px;top:652px">WPP-674</div>
<svg class="a" style="left:238px;top:655px" width="5" height="7" viewBox="0 0 5 7"><path d="M0.5 0 V6.5 L4.5 3.25 Z" fill="#6B778C"/></svg>
<div class="a" style="left:252px;top:654px;line-height:0"><svg width="12" height="12" viewBox="0 0 12 12"><rect x="0" y="0" width="12" height="12" fill="#fff"/><g fill="none" stroke="#4D4D4D" stroke-width="1.25"><ellipse cx="6" cy="2.8" rx="2.4" ry="1.4"/><circle cx="2.4" cy="8.6" r="1.8"/><circle cx="9.6" cy="8.6" r="1.8"/><path d="M3.6 3.4 L2.5 6.7 M8.4 3.4 L9.5 6.7 M4.2 9.6 Q6 11.9 7.8 9.6"/></g></svg></div>
<div class="c lnk" style="left:268px;top:652px">04 - 07 RAS PS</div>
<div class="c" style="left:449.7px;top:652px">R 920 620.06</div>
<div class="c" style="left:539.7px;top:652px">R</div>
<div class="c" style="left:629.7px;top:652px">R 920 620.06</div>
<div class="bd g" style="left:754px;top:652px">73.34 %</div>
<div class="bd g" style="left:844px;top:652px">100 %</div>
<div class="c" style="left:997px;top:652px">R 675 178.87</div>
<div class="c" style="left:1106px;top:652px">R</div>
<div class="bd w" style="left:1196px;top:652px">R 245 441</div>
<div class="c" style="left:1286px;top:652px">R</div>
<div class="c" style="left:1376px;top:652px">R 245 441</div>
<div class="c" style="left:1466px;top:652px">R -245 441</div>
<div class="c" style="left:1556px;top:652px">R</div>
<div class="c" style="left:1659px;top:652px">R -920 620.06</div>
<div class="a" style="left:16px;top:722px;width:1868px;height:1px;background:#EBECF0"></div>
<div class="c lnk" style="left:88px;top:690px">WPP-649</div>
<svg class="a" style="left:238px;top:693px" width="5" height="7" viewBox="0 0 5 7"><path d="M0.5 0 V6.5 L4.5 3.25 Z" fill="#6B778C"/></svg>
<div class="a" style="left:252px;top:692px;line-height:0"><svg width="12" height="12" viewBox="0 0 12 12"><rect x="0" y="0" width="12" height="12" fill="#fff"/><g fill="none" stroke="#4D4D4D" stroke-width="1.25"><ellipse cx="6" cy="2.8" rx="2.4" ry="1.4"/><circle cx="2.4" cy="8.6" r="1.8"/><circle cx="9.6" cy="8.6" r="1.8"/><path d="M3.6 3.4 L2.5 6.7 M8.4 3.4 L9.5 6.7 M4.2 9.6 Q6 11.9 7.8 9.6"/></g></svg></div>
<div class="c lnk" style="left:268px;top:690px">04 - 08 Division Boxes</div>
<div class="c" style="left:449.7px;top:690px">R 294 711.05</div>
<div class="c" style="left:539.7px;top:690px">R</div>
<div class="c" style="left:629.7px;top:690px">R 294 711.05</div>
<div class="bd g" style="left:754px;top:690px">30.39 %</div>
<div class="bd g" style="left:844px;top:690px">100 %</div>
<div class="c" style="left:997px;top:690px">R 89 569.59</div>
<div class="c" style="left:1106px;top:690px">R</div>
<div class="bd w" style="left:1196px;top:690px">R 205 141</div>
<div class="c" style="left:1286px;top:690px">R 0</div>
<div class="c" style="left:1376px;top:690px">R 205 141</div>
<div class="c" style="left:1466px;top:690px">R -205 141</div>
<div class="c" style="left:1556px;top:690px">R</div>
<div class="c" style="left:1659px;top:690px">R -294 711.05</div>
<div class="a" style="left:16px;top:763px;width:1868px;height:1px;background:#EBECF0"></div>
<div class="c lnk" style="left:88px;top:728px">WPP-675</div>
<svg class="a" style="left:238px;top:731px" width="5" height="7" viewBox="0 0 5 7"><path d="M0.5 0 V6.5 L4.5 3.25 Z" fill="#6B778C"/></svg>
<div class="a" style="left:252px;top:730px;line-height:0"><svg width="12" height="12" viewBox="0 0 12 12"><rect x="0" y="0" width="12" height="12" fill="#fff"/><g fill="none" stroke="#4D4D4D" stroke-width="1.25"><ellipse cx="6" cy="2.8" rx="2.4" ry="1.4"/><circle cx="2.4" cy="8.6" r="1.8"/><circle cx="9.6" cy="8.6" r="1.8"/><path d="M3.6 3.4 L2.5 6.7 M8.4 3.4 L9.5 6.7 M4.2 9.6 Q6 11.9 7.8 9.6"/></g></svg></div>
<div class="c lnk" style="left:268px;top:728px">04 - 09 Sludge waste</div>
<div class="c lnk" style="left:268px;top:743px">PS</div>
<div class="c" style="left:449.7px;top:728px">R 218 388.08</div>
<div class="c" style="left:539.7px;top:728px">R</div>
<div class="c" style="left:629.7px;top:728px">R 218 388.08</div>
<div class="bd g" style="left:754px;top:728px">96.6 %</div>
<div class="bd g" style="left:844px;top:728px">100 %</div>
<div class="c" style="left:997px;top:728px">R 210 969.08</div>
<div class="c" style="left:1106px;top:728px">R</div>
<div class="bd w" style="left:1196px;top:728px">R 7 419</div>
<div class="c" style="left:1286px;top:728px">R</div>
<div class="c" style="left:1376px;top:728px">R 7 419</div>
<div class="c" style="left:1466px;top:728px">R -7 419</div>
<div class="c" style="left:1556px;top:728px">R</div>
<div class="c" style="left:1659px;top:728px">R -218 388.08</div>
<div class="a" style="left:16px;top:802px;width:1868px;height:1px;background:#EBECF0"></div>
<div class="c lnk" style="left:88px;top:769px">WPP-678</div>
<svg class="a" style="left:238px;top:772px" width="5" height="7" viewBox="0 0 5 7"><path d="M0.5 0 V6.5 L4.5 3.25 Z" fill="#6B778C"/></svg>
<div class="a" style="left:252px;top:771px;line-height:0"><svg width="12" height="12" viewBox="0 0 12 12"><rect x="0" y="0" width="12" height="12" fill="#fff"/><g fill="none" stroke="#4D4D4D" stroke-width="1.25"><ellipse cx="6" cy="2.8" rx="2.4" ry="1.4"/><circle cx="2.4" cy="8.6" r="1.8"/><circle cx="9.6" cy="8.6" r="1.8"/><path d="M3.6 3.4 L2.5 6.7 M8.4 3.4 L9.5 6.7 M4.2 9.6 Q6 11.9 7.8 9.6"/></g></svg></div>
<div class="c lnk" style="left:268px;top:769px">04 - 10. Digester</div>
<div class="c" style="left:449.7px;top:769px">R 502 860.78</div>
<div class="c" style="left:539.7px;top:769px">R</div>
<div class="c" style="left:629.7px;top:769px">R 502 860.78</div>
<div class="bd g" style="left:754px;top:769px">100 %</div>
<div class="bd g" style="left:844px;top:769px">100 %</div>
<div class="c" style="left:997px;top:769px">R 502 860.78</div>
<div class="c" style="left:1106px;top:769px">R</div>
<div class="bd w" style="left:1196px;top:769px">R</div>
<div class="c" style="left:1286px;top:769px">R</div>
<div class="c" style="left:1376px;top:769px">R</div>
<div class="c" style="left:1466px;top:769px">R 0</div>
<div class="c" style="left:1556px;top:769px">R</div>
<div class="c" style="left:1659px;top:769px">R -502 860.78</div>
<div class="a" style="left:16px;top:840px;width:1868px;height:1px;background:#EBECF0"></div>
<div class="c lnk" style="left:88px;top:808px">WPP-459</div>
<svg class="a" style="left:238px;top:811px" width="5" height="7" viewBox="0 0 5 7"><path d="M0.5 0 V6.5 L4.5 3.25 Z" fill="#6B778C"/></svg>
<div class="a" style="left:252px;top:810px;line-height:0"><svg width="12" height="12" viewBox="0 0 12 12"><rect x="0" y="0" width="12" height="12" fill="#fff"/><g fill="none" stroke="#4D4D4D" stroke-width="1.25"><ellipse cx="6" cy="2.8" rx="2.4" ry="1.4"/><circle cx="2.4" cy="8.6" r="1.8"/><circle cx="9.6" cy="8.6" r="1.8"/><path d="M3.6 3.4 L2.5 6.7 M8.4 3.4 L9.5 6.7 M4.2 9.6 Q6 11.9 7.8 9.6"/></g></svg></div>
<div class="c lnk" style="left:268px;top:808px">04 - 11. Digestate</div>
<div class="c" style="left:382.5px;top:808px">17/Jan/25</div>
<div class="c" style="left:449.7px;top:808px">R 184 691.74</div>
<div class="c" style="left:539.7px;top:808px">R</div>
<div class="c" style="left:629.7px;top:808px">R 184 691.74</div>
<div class="bd g" style="left:754px;top:808px">69.75 %</div>
<div class="bd g" style="left:844px;top:808px">100 %</div>
<div class="c" style="left:997px;top:808px">R 128 820.7</div>
<div class="c" style="left:1106px;top:808px">R</div>
<div class="bd w" style="left:1196px;top:808px">R 55 871</div>
<div class="c" style="left:1286px;top:808px">R</div>
<div class="c" style="left:1376px;top:808px">R 55 871</div>
<div class="c" style="left:1466px;top:808px">R -55 871</div>
<div class="c" style="left:1556px;top:808px">R</div>
<div class="c" style="left:1659px;top:808px">R -184 691.74</div>
<div class="a" style="left:16px;top:881px;width:1868px;height:1px;background:#EBECF0"></div>
<div class="c lnk" style="left:88px;top:846px">WPP-677</div>
<svg class="a" style="left:238px;top:849px" width="5" height="7" viewBox="0 0 5 7"><path d="M0.5 0 V6.5 L4.5 3.25 Z" fill="#6B778C"/></svg>
<div class="a" style="left:252px;top:848px;line-height:0"><svg width="12" height="12" viewBox="0 0 12 12"><rect x="0" y="0" width="12" height="12" fill="#fff"/><g fill="none" stroke="#4D4D4D" stroke-width="1.25"><ellipse cx="6" cy="2.8" rx="2.4" ry="1.4"/><circle cx="2.4" cy="8.6" r="1.8"/><circle cx="9.6" cy="8.6" r="1.8"/><path d="M3.6 3.4 L2.5 6.7 M8.4 3.4 L9.5 6.7 M4.2 9.6 Q6 11.9 7.8 9.6"/></g></svg></div>
<div class="c lnk" style="left:268px;top:846px">04 - 12 Drying Beds</div>
<div class="c lnk" style="left:268px;top:861px">(PC)</div>
<div class="c" style="left:449.7px;top:846px">R 177 482.94</div>
<div class="c" style="left:539.7px;top:846px">R</div>
<div class="c" style="left:629.7px;top:846px">R 177 482.94</div>
<div class="bd g" style="left:754px;top:846px">99.38 %</div>
<div class="bd g" style="left:844px;top:846px">100 %</div>
<div class="c" style="left:997px;top:846px">R 176 385.34</div>
<div class="c" style="left:1106px;top:846px">R</div>
<div class="bd w" style="left:1196px;top:846px">R 1 098</div>
<div class="c" style="left:1286px;top:846px">R</div>
<div class="c" style="left:1376px;top:846px">R 1 098</div>
<div class="c" style="left:1466px;top:846px">R -1 098</div>
<div class="c" style="left:1556px;top:846px">R</div>
<div class="c" style="left:1659px;top:846px">R -177 482.94</div>
<div class="a" style="left:16px;top:914px;width:1868px;height:1px;background:#EBECF0"></div>
<div class="c lnk" style="left:88px;top:887px">WPP-670</div>
<svg class="a" style="left:238px;top:890px" width="5" height="7" viewBox="0 0 5 7"><path d="M0.5 0 V6.5 L4.5 3.25 Z" fill="#6B778C"/></svg>
<div class="a" style="left:252px;top:889px;line-height:0"><svg width="12" height="12" viewBox="0 0 12 12"><rect x="0" y="0" width="12" height="12" fill="#fff"/><g fill="none" stroke="#4D4D4D" stroke-width="1.25"><ellipse cx="6" cy="2.8" rx="2.4" ry="1.4"/><circle cx="2.4" cy="8.6" r="1.8"/><circle cx="9.6" cy="8.6" r="1.8"/><path d="M3.6 3.4 L2.5 6.7 M8.4 3.4 L9.5 6.7 M4.2 9.6 Q6 11.9 7.8 9.6"/></g></svg></div>
<div class="c lnk" style="left:268px;top:887px">04 - 13 Disinfection</div>
<div class="c" style="left:449.7px;top:887px">R 186 400</div>
<div class="c" style="left:539.7px;top:887px">R</div>
<div class="c" style="left:629.7px;top:887px">R 186 400</div>
<div class="bd g" style="left:754px;top:887px">100 %</div>
<div class="bd g" style="left:844px;top:887px">100 %</div>
<div class="c" style="left:997px;top:887px">R 186 400</div>
<div class="c" style="left:1106px;top:887px">R</div>
<div class="bd w" style="left:1196px;top:887px">R</div>
<div class="c" style="left:1286px;top:887px">R</div>
<div class="c" style="left:1376px;top:887px">R</div>
<div class="c" style="left:1466px;top:887px">R 0</div>
<div class="c" style="left:1556px;top:887px">R</div>
<div class="c" style="left:1659px;top:887px">R -186 400</div>
<div class="a" style="left:1885px;top:178px;width:15px;height:737px;background:#FBFBFA"></div>
<svg class="a" style="left:1888px;top:183px" width="9" height="7" viewBox="0 0 9 7"><path d="M4.5 0.5 L8.8 6.5 H0.2 Z" fill="#8A8A8A"/></svg>
<div class="a" style="left:1888px;top:196px;width:9px;height:551px;background:#8A8A8A;border-radius:4.5px"></div>
<svg class="a" style="left:1888px;top:903px" width="9" height="7" viewBox="0 0 9 7"><path d="M0.2 0.5 H8.8 L4.5 6.5 Z" fill="#8A8A8A"/></svg>
<div class="a" style="left:16px;top:914px;width:1884px;height:1px;background:#DFE1E6"></div>
<div class="a" style="left:16px;top:915px;width:1884px;height:6px;background:#F4F5F7"></div>
<div class="a" style="left:122px;top:918px;width:125px;height:3px;background:#DCDFE4;border-radius:2px 2px 0 0"></div>
</body></html>
